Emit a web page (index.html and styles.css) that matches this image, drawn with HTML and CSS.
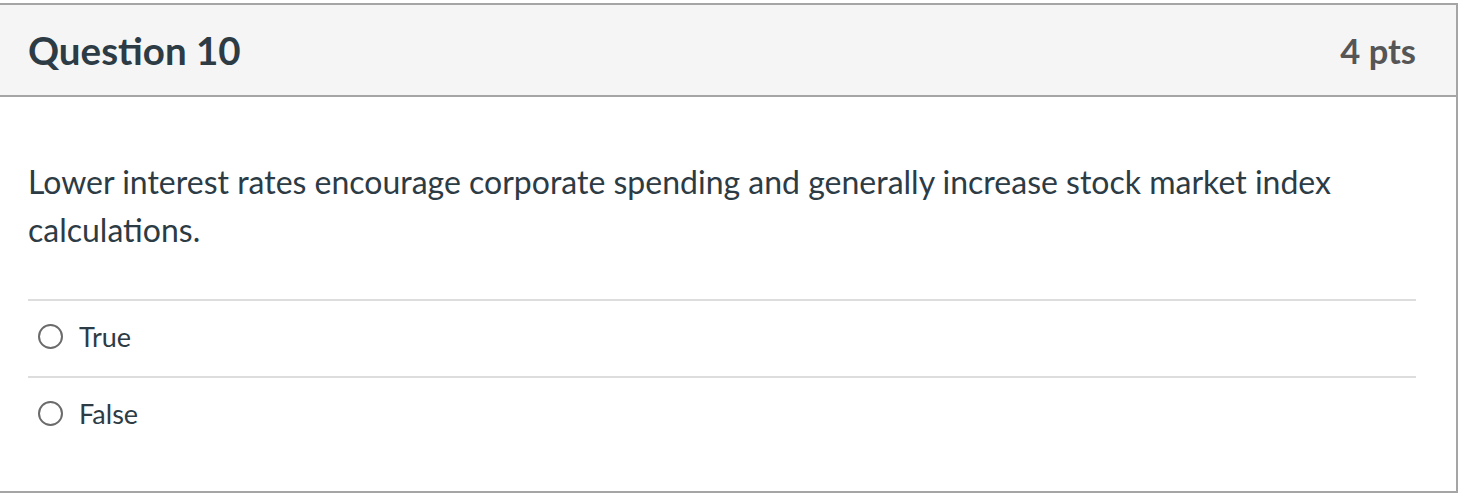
FILE: index.html
```html
<!DOCTYPE html>
<html>
<head>
<meta charset="utf-8">
<link rel="stylesheet" href="styles.css">
</head>
<body>
<div class="question">
  <div class="q-header">
    <h2 class="q-title">Question 10</h2>
    <span class="q-pts">4 pts</span>
  </div>
  <div class="q-body">
    <p class="q-text">Lower interest rates encourage corporate spending and generally increase stock market index calculations.</p>
    <div class="answers">
      <label class="answer"><span class="radio"></span><span class="answer-label">True</span></label>
      <label class="answer"><span class="radio"></span><span class="answer-label">False</span></label>
    </div>
  </div>
</div>
</body>
</html>
```
FILE: styles.css
```css
html, body {
  margin: 0;
  padding: 0;
  background: #ffffff;
}
body {
  font-family: Lato, "Open Sans", sans-serif;
  color: #2d3b45;
}
.question {
  margin: 3px 0 0 -2px;
  width: 1460px;
  box-sizing: border-box;
  border: 2px solid #a5a5a5;
  height: 490px;
}
.q-header {
  background: #f5f5f5;
  border-bottom: 2px solid #a5a5a5;
  height: 90px;
  box-sizing: content-box;
  display: flex;
  align-items: center;
  justify-content: space-between;
  padding: 0 40px 0 28px;
}
.q-title {
  margin: 0;
  font-size: 38.5px;
  font-weight: 700;
  color: #2d3b45;
}
.q-pts {
  font-size: 34.5px;
  font-weight: 700;
  color: #565656;
}
.q-body {
  padding: 0 40px 0 28px;
}
.q-text {
  margin: 0;
  padding: 61px 0 45px;
  font-size: 32px;
  line-height: 48px;
}
.answers {
  display: flex;
  flex-direction: column;
}
.answer {
  display: flex;
  align-items: center;
  border-top: 2px solid #dddddd;
  height: 75px;
  box-sizing: border-box;
  height: 77px;
  padding: 0 0 4px 10px;
  gap: 16px;
  font-size: 27px;
}
.radio {
  width: 21px;
  height: 21px;
  border: 2px solid #6b6b6b;
  border-radius: 50%;
}
```
